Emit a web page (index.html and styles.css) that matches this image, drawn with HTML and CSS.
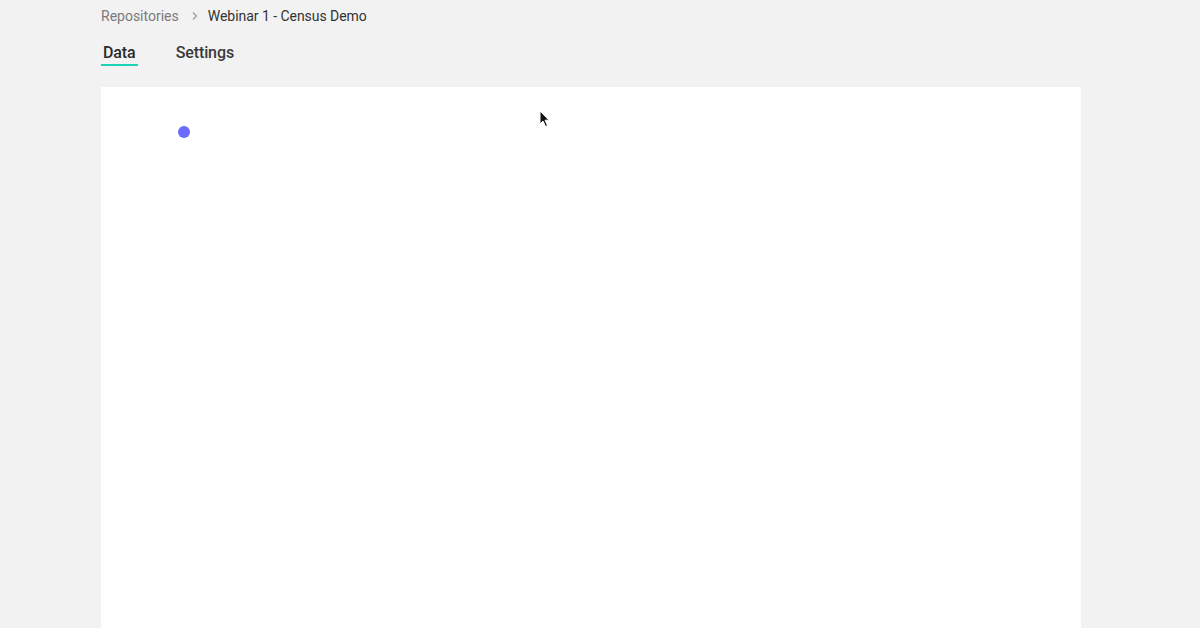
FILE: index.html
```html
<!DOCTYPE html>
<html>
<head>
<meta charset="utf-8">
<link rel="stylesheet" href="styles.css">
</head>
<body>
<div class="page">
  <nav class="crumbs">
    <span class="crumb-link">Repositories</span>
    <svg class="chev" width="8" height="10" viewBox="0 0 8 10"><path d="M2 1.5 L5.5 5 L2 8.5" fill="none" stroke="#9a9a9a" stroke-width="1.3"/></svg>
    <span class="crumb-current">Webinar 1 - Census Demo</span>
  </nav>
  <div class="tabs">
    <div class="tab active">Data</div>
    <div class="tab">Settings</div>
  </div>
  <main class="card">
    <div class="dot"></div>
    <svg class="cursor" width="12" height="18" viewBox="0 0 12 18"><path d="M1 1 L1 14 L4 11 L6.5 16.5 L8.5 15.5 L6 10.2 L10 10.2 Z" fill="#111" stroke="#fff" stroke-width="1"/></svg>
  </main>
</div>
</body>
</html>
```

FILE: styles.css
```css
html, body {
  margin: 0;
  padding: 0;
  background: #f2f2f2;
  font-family: Roboto, "Liberation Sans", sans-serif;
  height: 100%;
  overflow: hidden;
}
.page {
  width: 980px;
  margin-left: 101px;
  display: flex;
  flex-direction: column;
}
.crumbs {
  display: flex;
  align-items: center;
  height: 32px;
  font-size: 14px;
}
.crumb-link {
  color: #7a7a7a;
}
.chev {
  margin: 0 9px 0 12px;
}
.crumb-current {
  color: #333;
  letter-spacing: -0.04px;
}
.tabs {
  display: flex;
  gap: 36px;
  height: 35px;
  margin-top: 4px;
  align-items: flex-start;
}
.tab {
  font-size: 16px;
  font-weight: 500;
  color: #3a3a3a;
  padding: 0 2px;
  height: 30px;
  line-height: 34px;
  letter-spacing: -0.1px;
  box-sizing: border-box;
}
.tab.active {
  color: #2b2b2b;
  border-bottom: 2px solid #1dd3b7;
}
.card {
  position: relative;
  background: #fff;
  margin-top: 16px;
  height: 541px;
}
.dot {
  position: absolute;
  left: 77px;
  top: 39px;
  width: 12px;
  height: 12px;
  border-radius: 50%;
  background: #6b6bff;
}
.cursor {
  position: absolute;
  left: 438px;
  top: 23px;
}
```
